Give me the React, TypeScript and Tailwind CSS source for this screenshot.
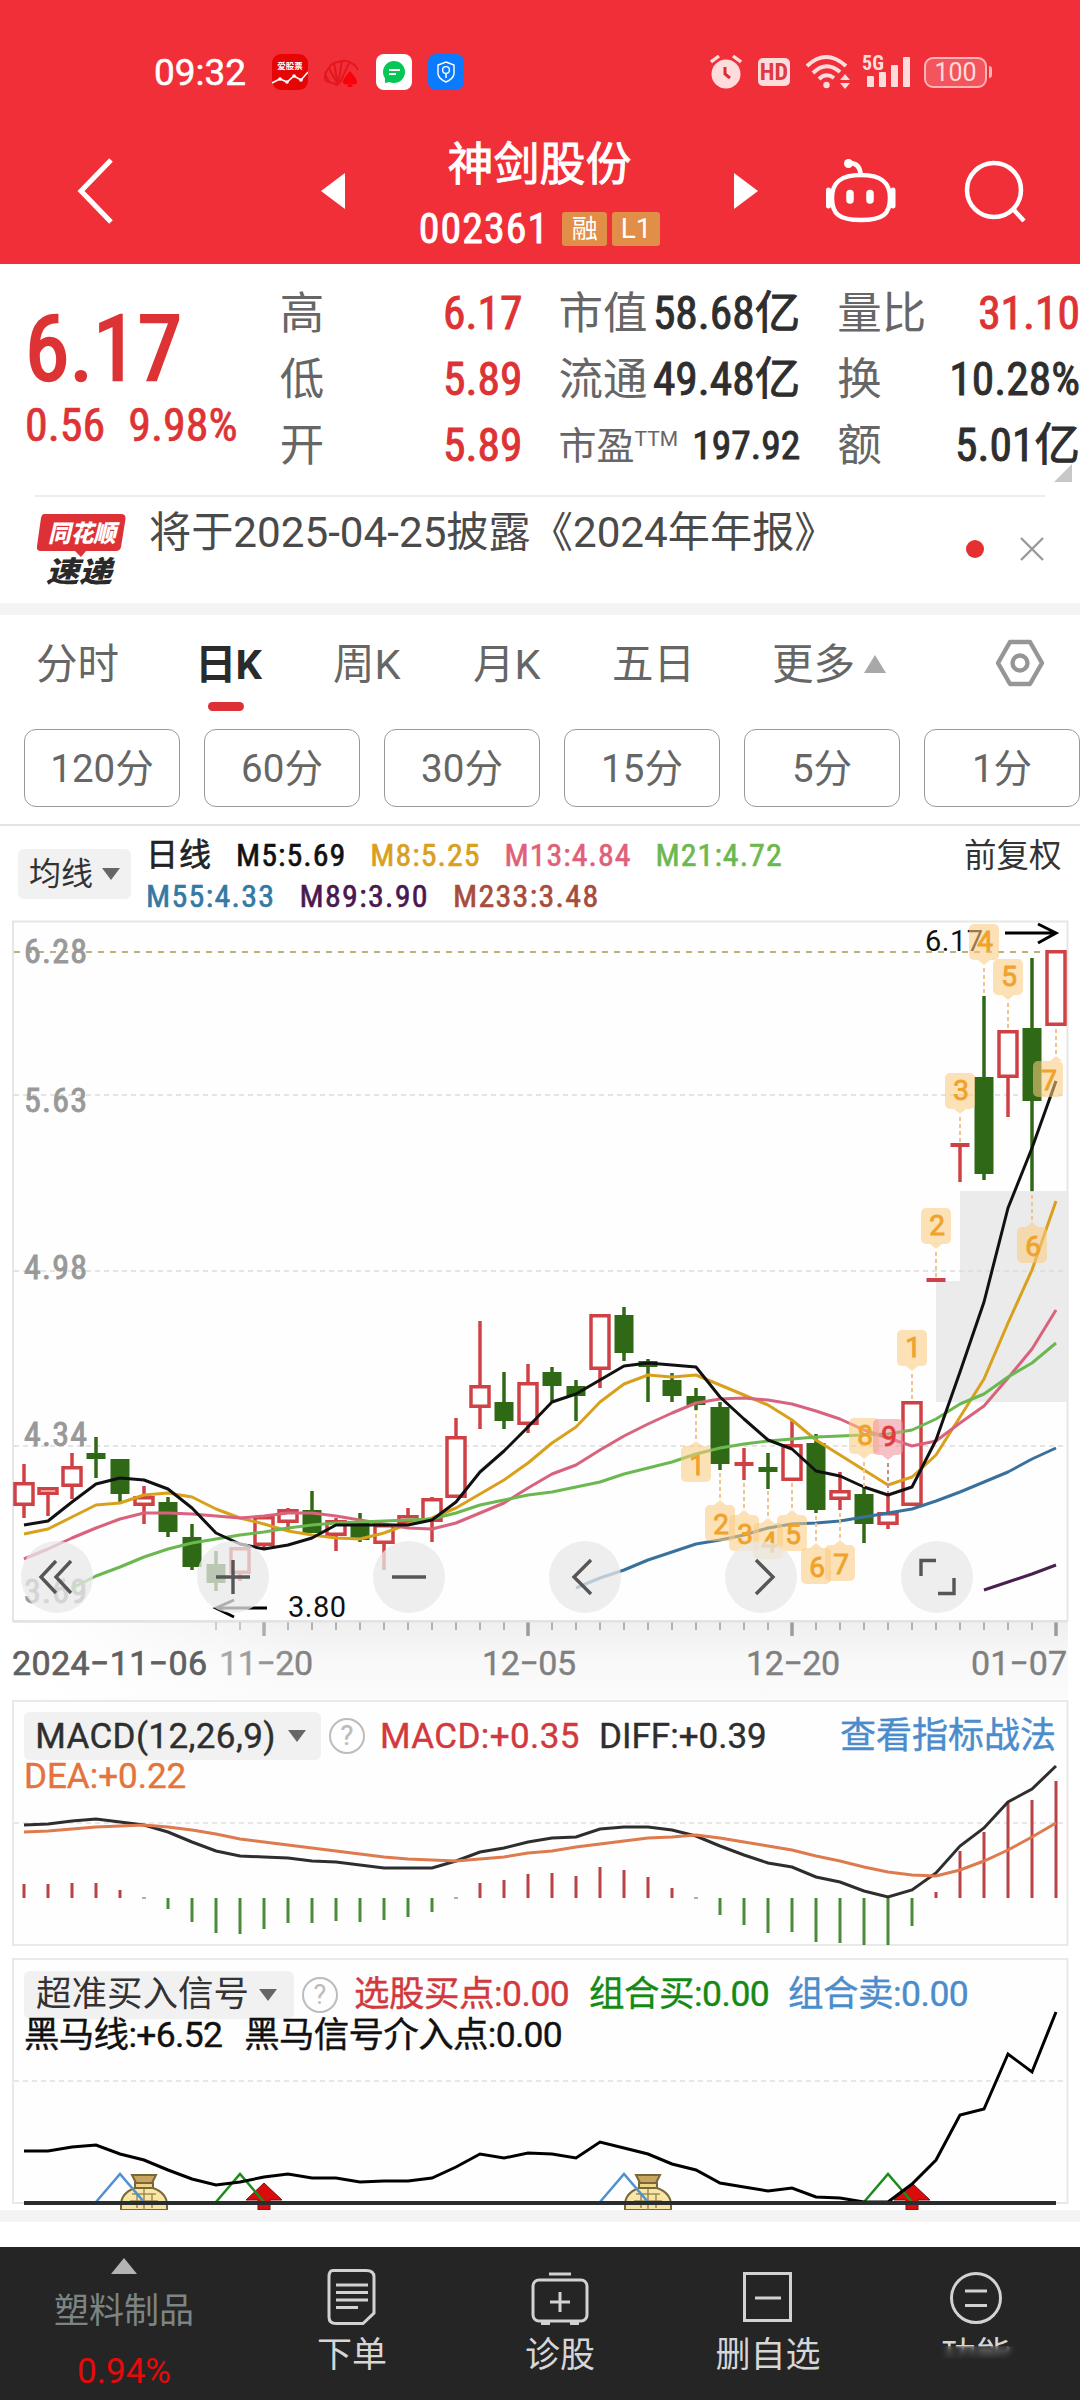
import type { ReactNode } from "react";

/* ── Chart data ── */

const STEP = 24;
const px = (i: number) => STEP + i * STEP;

// [up, high, body top, body bottom, low] in chart units
type Candle = [boolean, number, number, number, number];

const candles: Candle[] = [
  [true, 1464, 1482, 1506, 1518],
  [true, 1487, 1487, 1495, 1516],
  [true, 1453, 1466, 1487, 1499],
  [false, 1437, 1453, 1459, 1478],
  [false, 1459, 1459, 1494, 1504],
  [true, 1486, 1496, 1506, 1524],
  [false, 1497, 1502, 1532, 1537],
  [false, 1524, 1537, 1567, 1570],
  [false, 1551, 1564, 1583, 1591],
  [true, 1547, 1547, 1574, 1581],
  [true, 1516, 1516, 1546, 1550],
  [true, 1508, 1509, 1523, 1530],
  [false, 1491, 1510, 1533, 1533],
  [true, 1518, 1520, 1536, 1551],
  [false, 1513, 1523, 1540, 1542],
  [true, 1524, 1524, 1544, 1570],
  [true, 1508, 1515, 1524, 1524],
  [true, 1497, 1498, 1522, 1542],
  [true, 1418, 1436, 1498, 1498],
  [true, 1321, 1385, 1408, 1429],
  [false, 1372, 1402, 1421, 1429],
  [true, 1364, 1382, 1425, 1433],
  [false, 1367, 1372, 1386, 1402],
  [false, 1380, 1386, 1396, 1421],
  [true, 1314, 1314, 1370, 1388],
  [false, 1307, 1315, 1353, 1361],
  [false, 1359, 1361, 1367, 1402],
  [false, 1373, 1380, 1396, 1402],
  [false, 1388, 1396, 1405, 1410],
  [false, 1402, 1407, 1464, 1470],
  [true, 1448, 1462, 1466, 1480],
  [false, 1453, 1467, 1472, 1489],
  [true, 1421, 1444, 1481, 1481],
  [false, 1434, 1443, 1510, 1513],
  [true, 1472, 1490, 1500, 1510],
  [false, 1488, 1494, 1524, 1543],
  [true, 1493, 1512, 1525, 1529],
  [true, 1401, 1401, 1506, 1506],
  [true, 1278, 1278, 1282, 1282],
  [true, 1143, 1143, 1147, 1182],
  [false, 996, 1077, 1174, 1180],
  [true, 1030, 1030, 1078, 1117],
  [false, 958, 1028, 1101, 1191],
  [true, 950, 950, 1026, 1026],
];

const ma = [
  { color: "#d9a01c", start: 0, ys: [1534, 1529, 1517, 1505, 1503, 1495, 1493, 1497, 1509, 1518, 1524, 1531, 1535, 1538, 1539, 1533, 1524, 1518, 1508, 1494, 1480, 1463, 1443, 1427, 1402, 1384, 1375, 1377, 1375, 1385, 1395, 1405, 1420, 1440, 1455, 1470, 1485, 1477, 1455, 1417, 1379, 1323, 1270, 1201] },
  { color: "#d9627c", start: 0, ys: [1559, 1549, 1538, 1528, 1519, 1513, 1513, 1514, 1516, 1518, 1516, 1513, 1513, 1516, 1520, 1524, 1528, 1529, 1523, 1513, 1503, 1488, 1474, 1465, 1450, 1436, 1424, 1413, 1403, 1399, 1398, 1400, 1404, 1411, 1419, 1430, 1438, 1446, 1441, 1423, 1406, 1378, 1349, 1310] },
  { color: "#6cb850", start: 2, ys: [1588, 1576, 1567, 1557, 1549, 1543, 1539, 1535, 1532, 1528, 1525, 1523, 1522, 1521, 1520, 1519, 1513, 1505, 1500, 1495, 1492, 1487, 1482, 1474, 1468, 1462, 1454, 1448, 1444, 1441, 1439, 1437, 1436, 1435, 1434, 1430, 1419, 1404, 1394, 1377, 1363, 1343] },
  { color: "#38729c", start: 23, ys: [1588, 1578, 1570, 1560, 1552, 1544, 1540, 1535, 1528, 1524, 1523, 1521, 1517, 1513, 1509, 1501, 1492, 1482, 1472, 1459, 1448] },
  { color: "#4a2050", start: 40, ys: [1590, 1582, 1574, 1565] },
  { color: "#111111", start: 0, ys: [1525, 1521, 1502, 1484, 1478, 1480, 1489, 1508, 1533, 1544, 1549, 1545, 1538, 1525, 1525, 1525, 1525, 1520, 1502, 1472, 1451, 1427, 1402, 1394, 1380, 1366, 1363, 1365, 1367, 1397, 1419, 1440, 1449, 1471, 1476, 1487, 1495, 1487, 1440, 1372, 1302, 1208, 1148, 1081] },
];

const diff = [1825, 1824, 1821, 1819, 1822, 1825, 1832, 1842, 1851, 1856, 1857, 1858, 1861, 1862, 1865, 1868, 1868, 1868, 1861, 1852, 1848, 1842, 1838, 1837, 1829, 1827, 1827, 1830, 1836, 1846, 1855, 1863, 1867, 1877, 1882, 1891, 1897, 1890, 1873, 1846, 1828, 1802, 1789, 1766];
const dea = [1832, 1831, 1829, 1827, 1826, 1825, 1827, 1830, 1834, 1839, 1842, 1845, 1848, 1851, 1854, 1857, 1859, 1860, 1861, 1859, 1857, 1853, 1851, 1847, 1844, 1841, 1838, 1837, 1835, 1838, 1842, 1846, 1850, 1856, 1861, 1867, 1872, 1875, 1876, 1870, 1861, 1850, 1837, 1823];
const macd = [1884, 1884, 1883, 1883, 1890, 1898, 1909, 1922, 1933, 1934, 1929, 1923, 1923, 1921, 1922, 1920, 1917, 1912, 1898, 1883, 1880, 1874, 1873, 1876, 1867, 1870, 1877, 1888, 1898, 1915, 1925, 1933, 1932, 1942, 1943, 1945, 1945, 1926, 1892, 1851, 1832, 1803, 1800, 1781];
const horse = [2151, 2151, 2147, 2145, 2154, 2160, 2170, 2179, 2185, 2182, 2177, 2174, 2178, 2178, 2182, 2181, 2181, 2178, 2167, 2154, 2158, 2153, 2154, 2158, 2142, 2148, 2154, 2164, 2170, 2183, 2187, 2191, 2188, 2197, 2198, 2202, 2202, 2184, 2160, 2115, 2109, 2054, 2072, 2012];

const line = (ys: number[], start = 0) => ys.map((y, i) => `${px(start + i)},${y}`).join(" ");

// Nine-turn counters: [label, x, box top, dash end, direction the tip points]
const marks: [string, number, number, number, "down" | "up"][] = [
  ["1", 696, 1446, 1410, "up"],
  ["2", 720, 1505, 1470, "up"],
  ["3", 744, 1515, 1480, "up"],
  ["4", 768, 1523, 1489, "up"],
  ["5", 792, 1515, 1481, "up"],
  ["6", 816, 1548, 1513, "up"],
  ["7", 840, 1545, 1510, "up"],
  ["8", 864, 1418, 1488, "down"],
  ["9", 888, 1419, 1493, "down"],
  ["1", 912, 1330, 1400, "down"],
  ["2", 936, 1208, 1278, "down"],
  ["3", 960, 1073, 1144, "down"],
  ["4", 984, 924, 996, "down"],
  ["5", 1008, 959, 1030, "down"],
  ["6", 1032, 1227, 1191, "up"],
  ["7", 1056, 1061, 1027, "up"],
];

/* ── Small pieces ── */

function Caret({ className }: { className?: string }) {
  return (
    <svg viewBox="0 0 18 12" className={`w-[18px] h-3 ${className ?? ""}`}>
      <path d="M0 0H18L9 12Z" fill="#666" />
    </svg>
  );
}

function Help() {
  return (
    <span className="flex items-center justify-center w-[36px] h-[36px] rounded-full border-[2.5px] border-[#bcbcbc] text-[#bcbcbc] text-[27px] leading-none">
      ?
    </span>
  );
}

function Mark({ label, x, y, end, dir }: { label: string; x: number; y: number; end: number; dir: "down" | "up" }) {
  const hot = label === "9";
  const cx = x === 1056 ? 1048 : x;
  const tip = dir === "down" ? `M${x - 6} ${y + 36}h12l-6 5z` : `M${x - 6} ${y}h12l-6 -5z`;
  return (
    <g>
      <line
        x1={x}
        x2={x}
        y1={dir === "down" ? y + 44 : y - 7}
        y2={end}
        stroke={hot ? "#c98a94" : "#f0c48e"}
        strokeWidth="2"
        strokeDasharray="4 3"
      />
      <g fill={hot ? "#f0929c" : "#fccb80"} opacity="0.56">
        <rect x={cx - 15} y={y} width="30" height="36" rx="5" />
        <path d={tip} />
      </g>
      <text
        x={cx + 1}
        y={y + (dir === "down" ? 27 : 29)}
        textAnchor="middle"
        fontSize="28"
        fill={hot ? "#e23a3a" : "#efa32c"}
        stroke={hot ? "#e23a3a" : "#efa32c"}
        strokeWidth="0.9"
      >
        {label}
      </text>
    </g>
  );
}

function MoneyBag({ x }: { x: number }) {
  return (
    <g transform={`translate(${x} 2174)`} stroke="#77683a" strokeWidth="2">
      <path d="M-12 1H12L8 9H-8Z" fill="#c9a560" />
      <path d="M-9 9H9V14H-9Z" fill="#f0d58a" />
      <path d="M-9 14Q-23 19 -23 31V36H23V31Q23 19 9 14Z" fill="#f7e6a6" />
      <path d="M-12 20H12M-14 27H14M0 15V36M-7 20V34M8 20V34" strokeWidth="1.5" stroke="#a08c50" />
    </g>
  );
}

function RedArrow({ x }: { x: number }) {
  return <path d={`M${x} 2183L${x + 18} 2200H${x + 6}V2210H${x - 6}V2200H${x - 18}Z`} fill="#d80c0c" stroke="#7a1010" strokeWidth="1" />;
}

function RoundButton({ children }: { children: ReactNode }) {
  return (
    <button className="flex items-center justify-center w-[72px] h-[72px] rounded-full bg-[#e8e8e8]/75">
      <svg viewBox="0 0 40 40" className="w-10 h-10" fill="none" stroke="#565656" strokeWidth="3.4">
        {children}
      </svg>
    </button>
  );
}

/* ── Header ── */

function StatusBar() {
  return (
    <div className="flex items-center justify-between h-[136px] mt-2 pl-[154px] pr-[88px] text-white -translate-y-1">
      <div className="flex items-center">
        <span className="w-[118px] text-[37px] leading-none [-webkit-text-stroke:0.5px_white]">09:32</span>
        <svg viewBox="0 0 36 36" className="w-9 h-9">
          <rect width="36" height="36" rx="9" fill="#e60505" />
          <text x="18" y="15" textAnchor="middle" fontSize="8.5" fontWeight="700" fill="#fff">爱股票</text>
          <path d="M0 29L8 25L15 28L22 22L29 26L36 18" stroke="#fff" strokeWidth="1.6" fill="none" />
          <g fill="#fff">
            <circle cx="8" cy="25" r="1.8" />
            <circle cx="15" cy="28" r="1.8" />
            <circle cx="22" cy="22" r="1.8" />
            <circle cx="29" cy="26" r="1.8" />
          </g>
        </svg>
        <svg viewBox="0 0 36 36" className="w-9 h-9 ml-4" fill="none" stroke="#e4161e" strokeWidth="2">
          <path d="M14 31L2 27Q-1 20 5 14Q8 8 15 8Q22 5 27 9Q32 11 34 16" />
          <path d="M14 31L5 14M14 31L10 9M14 31L18 7M16 29L25 9M5 27L1 21" />
          <path d="M26 17Q34 26 33 29Q30 32 27 29L29 33H23L25 29Q22 32 19 29Q18 26 26 17Z" fill="#fa0008" stroke="none" />
        </svg>
        <svg viewBox="0 0 36 36" className="w-9 h-9 ml-4">
          <rect width="36" height="36" rx="8" fill="#fff" />
          <circle cx="18" cy="18" r="11" fill="#06c755" />
          <path d="M9 21V29L18 27Z" fill="#06c755" />
          <path d="M13 16H24M13 20H20" stroke="#fff" strokeWidth="1.8" />
        </svg>
        <svg viewBox="0 0 36 36" className="w-9 h-9 ml-4">
          <rect width="36" height="36" rx="8" fill="#0a7bff" />
          <path d="M18 8L26 11V20Q25 25 18 28Q11 25 10 20V11Z" fill="none" stroke="#fff" strokeWidth="1.4" />
          <circle cx="18" cy="16" r="3.4" fill="none" stroke="#fff" strokeWidth="1.4" />
          <path d="M18 19V24" stroke="#fff" strokeWidth="1.6" />
        </svg>
      </div>

      <div className="flex items-center text-[#ffdcdc]">
        <svg viewBox="0 0 32 36" className="w-8 h-9" fill="#ffdcdc" stroke="#ffdcdc">
          <circle cx="16" cy="20" r="14.5" stroke="none" />
          <path d="M1 8L9 2M31 8L23 2" strokeWidth="3.4" />
          <path d="M15 13V20L20 24" stroke="#dd2a33" strokeWidth="3" fill="none" />
        </svg>
        <span className="flex items-center justify-center w-8 h-7 ml-4 rounded-[5px] bg-[#ffdcdc] text-[#dd3a42] text-[24px] font-bold leading-none font-['Roboto_Condensed']">
          HD
        </span>
        <svg viewBox="0 0 46 36" className="w-[46px] h-9 ml-4" fill="none" stroke="#ffdcdc" strokeWidth="4">
          <path d="M1 12Q20 -6 40 12" />
          <path d="M7 19Q20 6 34 18" />
          <path d="M13 25Q20 18 28 24" />
          <circle cx="20.5" cy="31" r="3.2" fill="#ffdcdc" stroke="none" />
          <path d="M34 26L39 20L44 26ZM34 29H44L39 35Z" fill="#ffdcdc" stroke="none" />
        </svg>
        <svg viewBox="0 0 48 36" className="w-12 h-9 ml-[10px]" fill="#ffdcdc">
          <text x="0" y="16" fontSize="20" fontWeight="700" fontFamily="Roboto Condensed" textLength="22">5G</text>
          <rect x="5" y="22" width="7" height="11" rx="1" />
          <rect x="17" y="18" width="7" height="15" rx="1" />
          <rect x="29" y="11" width="7" height="22" rx="1" />
          <rect x="41" y="3" width="7" height="30" rx="1" />
        </svg>
        <span className="flex items-center justify-center w-[63px] h-[31px] ml-[14px] rounded-[9px] border-[2.5px] border-[#ffb4b8] bg-[#f4545c] text-[25px] leading-none">
          100
        </span>
        <span className="w-[3px] h-3 ml-[2px] rounded-r bg-[#ffb4b8]" />
      </div>
    </div>
  );
}

function TitleBar() {
  return (
    <div className="flex items-center h-[120px] pl-[76px] pb-[26px] text-white">
      <svg viewBox="0 0 38 66" className="w-[38px] h-[66px] shrink-0" fill="none" stroke="#fff" strokeWidth="5">
        <path d="M35 2L5 33L35 64" />
      </svg>
      <svg viewBox="0 0 24 36" className="w-6 h-9 ml-[207px] shrink-0" fill="#fff">
        <path d="M24 0V36L0 18Z" />
      </svg>
      <div className="flex flex-col items-center w-[389px] self-start -mt-[3px] shrink-0">
        <h1 className="text-[46px] leading-[46px] font-normal [-webkit-text-stroke:0.9px_white]">神剑股份</h1>
        <div className="flex items-center h-[34px] mt-[25px] gap-[5px]">
          <span className="mr-2 text-[42px] leading-none tracking-[1px] font-['Roboto_Condensed'] [-webkit-text-stroke:0.8px_white]">002361</span>
          <span className="flex items-center justify-center w-[45px] h-[34px] rounded-[3px] bg-[#e08e48] text-[26px] leading-none">融</span>
          <span className="flex items-center justify-center w-[48px] h-[34px] rounded-[3px] bg-[#e08e48] text-[28px] leading-none">L1</span>
        </div>
      </div>
      <svg viewBox="0 0 24 36" className="w-6 h-9 shrink-0" fill="#fff">
        <path d="M0 0V36L24 18Z" />
      </svg>
      <svg viewBox="826 158 72 66" className="w-[72px] h-[66px] ml-[67px] shrink-0" fill="none" stroke="#fff" strokeWidth="4.5">
        <path d="M850 163Q861 163 861.5 174" />
        <circle cx="849.5" cy="163.500" r="4.500" fill="#fff" stroke="none" />
        <path d="M833 198C833 182 842 175 862 175S891 182 891 198S884 220 862 220S833 214 833 198Z" />
        <path d="M829.500 190V206M894 190V206" strokeWidth="5" strokeLinecap="round" />
        <path d="M851 193.500V200M871 193.500V200" strokeWidth="7.500" strokeLinecap="round" />
      </svg>
      <svg viewBox="0 0 62 62" className="w-[62px] h-[62px] ml-[67px] shrink-0" fill="none" stroke="#fff" strokeWidth="4.5">
        <circle cx="30" cy="30" r="27" />
        <path d="M49 49L60 61" />
      </svg>
    </div>
  );
}

/* ── Quote ── */

function Stat({ label, value, red, small }: { label: ReactNode; value: string; red?: boolean; small?: boolean }) {
  return (
    <div className="flex items-center justify-between h-[66px]">
      <span className={small ? "flex text-[38px] leading-[66px] text-[#666]" : "text-[44.5px] leading-[66px] text-[#666]"}>{label}</span>
      <span
        className={`leading-[66px] whitespace-nowrap font-['Roboto_Condensed','Noto_Sans_CJK_SC',sans-serif] ${small ? "text-[39.5px]" : "text-[45.5px]"} ${
          red ? "text-[#dd3335] [-webkit-text-stroke:0.9px_#dd3335]" : "text-[#2e2e2e] [-webkit-text-stroke:0.9px_#2e2e2e]"
        }`}
      >
        {value}
      </span>
    </div>
  );
}

function Quote() {
  return (
    <section className="relative flex h-[231px] pt-[17px]">
      <div className="w-[280px] pl-[25px] text-[#dd3335] font-['Roboto_Condensed']">
        <p className="mt-[23px] text-[90px] leading-[92px] [-webkit-text-stroke:2.4px_#dd3335]">6.17</p>
        <p className="flex gap-[23px] mt-[6px] text-[46px] leading-[46px] [-webkit-text-stroke:0.7px_#dd3335]">
          <span>0.56</span>
          <span>9.98%</span>
        </p>
      </div>
      <div className="w-[243px]">
        <Stat label="高" value="6.17" red />
        <Stat label="低" value="5.89" red />
        <Stat label="开" value="5.89" red />
      </div>
      <div className="w-[242px] ml-[36px]">
        <Stat label="市值" value="58.68亿" />
        <Stat label="流通" value="49.48亿" />
        <Stat
          small
          label={
            <>
              市盈<sup className="text-[21px] leading-none top-[16px] h-6">TTM</sup>
            </>
          }
          value="197.92"
        />
      </div>
      <div className="w-[243px] ml-[37px]">
        <Stat label="量比" value="31.10" red />
        <Stat label="换" value="10.28%" />
        <Stat label="额" value="5.01亿" />
      </div>
      <svg viewBox="0 0 18 18" className="absolute right-2 bottom-[13px] w-[18px] h-[18px]">
        <path d="M18 0V18H0Z" fill="#c8c8c8" />
      </svg>
    </section>
  );
}

function News() {
  return (
    <section className="flex h-[108px] mx-[35px] border-t-2 border-[#ececec] text-[#4a4a4a]">
      <svg viewBox="35 510 92 78" className="w-[92px] h-[78px] mt-[14px] shrink-0">
        <path d="M44 513H121Q126 513 125.500 518L121 546Q120 550 116 550H86L81 556L75 550H41Q36 550 37 545L41 517Q42 513 44 513Z" fill="#dd3136" />
        <text x="82" y="541" textAnchor="middle" fontSize="24" fontWeight="900" fill="#fff" fontStyle="italic" textLength="68" lengthAdjust="spacingAndGlyphs">
          同花顺
        </text>
        <text x="79" y="581" textAnchor="middle" fontSize="29" fontWeight="900" fill="#2a2a2a" fontStyle="italic" textLength="66" lengthAdjust="spacingAndGlyphs">
          速递
        </text>
      </svg>
      <p className="w-[817px] ml-[22px] mt-[8px] text-[42.2px] leading-[56px] whitespace-nowrap">将于2025-04-25披露《2024年年报》</p>
      <span className="w-[18px] h-[18px] mt-[43px] rounded-full bg-[#e6302f] shrink-0" />
      <svg viewBox="0 0 24 24" className="w-6 h-6 mt-[40px] ml-[36px] shrink-0" stroke="#999" strokeWidth="2.4">
        <path d="M1 1L23 23M23 1L1 23" />
      </svg>
    </section>
  );
}

/* ── Period tabs ── */

function Tabs() {
  return (
    <nav className="flex h-[114px] pl-[36px] pt-[23px] text-[41.5px] leading-[54px] text-[#666]">
      <span className="w-[159px]">分时</span>
      <div className="w-[138px]">
        <p className="text-[#2b2b2b] font-bold tracking-[-1px]">日K</p>
        <div className="w-9 h-[9px] mt-[10px] ml-[13px] rounded-full bg-[#dd3136]" />
      </div>
      <span className="w-[140px]">周K</span>
      <span className="w-[139px]">月K</span>
      <span className="w-[160px]">五日</span>
      <span className="w-[84px]">更多</span>
      <svg viewBox="0 0 22 18" className="w-[22px] h-[18px] mt-[17px] ml-[8px]">
        <path d="M11 0L22 18H0Z" fill="#a8a8a8" />
      </svg>
      <svg viewBox="0 0 50 48" className="w-[50px] h-12 ml-[109px] mt-px" fill="none" stroke="#969696" strokeWidth="4.4">
        <path d="M15 3H35L47 24L35 45H15L3 24Z" strokeLinejoin="round" />
        <circle cx="25" cy="24" r="7.500" />
      </svg>
    </nav>
  );
}

function Chips() {
  return (
    <div className="flex gap-6 h-[97px] pl-6 border-b-2 border-[#e4e4e4] overflow-hidden">
      {["120分", "60分", "30分", "15分", "5分", "1分"].map((label) => (
        <button key={label} className="flex items-center justify-center w-[156px] h-[78px] pt-[2px] rounded-xl border-[1.5px] border-[#999] text-[38.5px] leading-none text-[#666] shrink-0">
          {label}
        </button>
      ))}
    </div>
  );
}

function Averages() {
  return (
    <div className="flex h-[94px] pl-[18px] font-['Roboto_Condensed','Noto_Sans_CJK_SC',sans-serif] text-[32px]">
      <button className="flex items-center justify-center gap-[9px] w-[113px] h-[50px] mt-[23px] rounded-md bg-[#f1f1f1] text-[32px] leading-none text-[#333]">
        均线
        <Caret />
      </button>
      <div className="ml-[15px] pt-[9px] w-[818px] leading-[41px] tracking-[1px] whitespace-nowrap">
        <p className="flex h-[41px] gap-[24px] [-webkit-text-stroke:0.6px]">
          <span className="text-[#222]">日线</span>
          <span className="text-[#111]">M5:5.69</span>
          <span className="text-[#d9a01c]">M8:5.25</span>
          <span className="text-[#e0607a]">M13:4.84</span>
          <span className="text-[#6cb850]">M21:4.72</span>
        </p>
        <p className="flex h-[41px] gap-[24px] tracking-[1.3px] [-webkit-text-stroke:0.6px]">
          <span className="text-[#3478a4]">M55:4.33</span>
          <span className="text-[#4a1850]">M89:3.90</span>
          <span className="text-[#a84c3c]">M233:3.48</span>
        </p>
      </div>
      <span className="pt-[10px] leading-[41px] text-[32.500px] text-[#333]">前复权</span>
    </div>
  );
}

/* ── Charts ── */

function KLine() {
  return (
    <section className="relative h-[780px]">
      <svg viewBox="0 920 1080 780" className="block w-[1080px] h-[780px]">
        <defs>
          <linearGradient id="axis" x1="0" x2="0" y1="0" y2="1">
            <stop offset="0" stopColor="#efefef" />
            <stop offset="0.5" stopColor="#f8f8f8" />
            <stop offset="1" stopColor="#fbfbfb" />
          </linearGradient>
          <linearGradient id="fade" x1="0" x2="1" y1="0" y2="0">
            <stop offset="0" stopColor="#fff" />
            <stop offset="0.25" stopColor="#fff" stopOpacity="0.85" />
            <stop offset="1" stopColor="#fff" stopOpacity="0" />
          </linearGradient>
        </defs>

        <rect x="13" y="1621" width="1055" height="78" fill="url(#axis)" />
        <path d="M13 1621V921.500H1067.500V1621Z" fill="#fefefe" stroke="#e6e6e6" strokeWidth="2" />
        <path d="M960 1191H1067V1402H936V1281H960Z" fill="#ebebeb" />

        <g stroke="#dcdcdc" strokeWidth="1.600" strokeDasharray="5 4">
          <path d="M14 1095H1066M14 1271H1066M14 1446H1066" />
        </g>
        <path d="M14 952H1046" stroke="#bdb27c" strokeWidth="1.800" strokeDasharray="6 6" />

        <g fontSize="34" fill="#999" stroke="#999" strokeWidth="0.900" fontFamily="Roboto Condensed">
          <text x="24" y="963" textLength="63">6.28</text>
          <text x="24" y="1112" textLength="63">5.63</text>
          <text x="24" y="1279" textLength="63">4.98</text>
          <text x="24" y="1446" textLength="63">4.34</text>
          <text x="24" y="1603" textLength="63">3.69</text>
        </g>

        {candles.map(([up, high, top, bottom, low], i) => {
          const x = px(i);
          const flat = bottom - top <= 5;
          return (
            <g key={i} stroke={up ? "#cf4145" : "#306915"} strokeWidth="3.500">
              {high < top && <line x1={x} x2={x} y1={high} y2={top} />}
              {low > bottom && <line x1={x} x2={x} y1={bottom} y2={low} />}
              {up && !flat ? (
                <rect x={x - 9} y={top + 1.75} width="18" height={Math.max(bottom - top - 3.5, 3)} fill="#fff" />
              ) : (
                <rect x={x - 9.5} y={top} width="19" height={bottom - top} fill={up ? "#cf4145" : "#306915"} stroke="none" />
              )}
            </g>
          );
        })}

        {ma.map(({ color, start, ys }) => (
          <polyline key={color} points={line(ys, start)} fill="none" stroke={color} strokeWidth="3" strokeLinejoin="round" />
        ))}

        <g fontSize="29" fill="#111">
          <text x="925" y="951" textLength="58">6.17</text>
          <text x="288" y="1617" textLength="58">3.80</text>
        </g>

        <g fontFamily="Roboto">
          {marks.map(([label, x, y, end, dir]) => (
            <Mark key={`${x}`} label={label} x={x} y={y} end={end} dir={dir} />
          ))}
        </g>

        <g fill="none" stroke="#000" strokeWidth="3">
          <path d="M1005 933H1055M1038 924L1056 933L1038 943" />
          <path d="M267 1608H217M234 1600L216 1608L234 1617" />
        </g>

        {/* Time axis */}
        <g stroke="#9c9c9c">
          {Array.from({ length: 36 }, (_, n) => n + 8).map((i) => {
            const major = (i - 10) % 11 === 0;
            return <line key={i} x1={px(i)} x2={px(i)} y1="1622" y2={major ? 1636 : 1630} strokeWidth={major ? 3.5 : 1.5} />;
          })}
        </g>
        <path d="M13 1621.500H1067" stroke="#e2e2e2" strokeWidth="2" />
        <g fontSize="34" fill="#808080" stroke="#808080" strokeWidth="0.400">
          <text x="219" y="1675" textLength="94">11−20</text>
          <text x="482" y="1675" textLength="94">12−05</text>
          <text x="746" y="1675" textLength="94">12−20</text>
          <text x="971" y="1675" textLength="96">01−07</text>
        </g>
        <rect x="12" y="1623" width="298" height="75" fill="url(#fade)" />
        <text x="12" y="1675" fontSize="34" fill="#606060" stroke="#606060" strokeWidth="0.700" textLength="195">2024−11−06</text>
      </svg>

      {/* Floating chart controls */}
      <div className="absolute left-[21px] top-[621px] flex gap-[104px]">
        <RoundButton>
          <path d="M19 4L4 20L19 36M34 4L19 20L34 36" />
        </RoundButton>
        <RoundButton>
          <path d="M3 20H37M20 3V37" />
        </RoundButton>
        <RoundButton>
          <path d="M3 20H37" />
        </RoundButton>
        <RoundButton>
          <path d="M26 3L9 20L26 37" />
        </RoundButton>
        <RoundButton>
          <path d="M15 3L32 20L15 37" />
        </RoundButton>
        <RoundButton>
          <path d="M19 3.500H4V19M37 21V36.500H21" />
        </RoundButton>
      </div>
    </section>
  );
}

function MacdPanel() {
  return (
    <section className="relative h-[246px] mx-3">
      <svg viewBox="12 1700 1057 246" className="absolute inset-0 w-[1057px] h-[246px]">
        <rect x="13" y="1701" width="1054.500" height="244" fill="#fefefe" stroke="#e9e9e9" strokeWidth="2" />
        <path d="M14 1823H1066" stroke="#e0e0e0" strokeWidth="1.500" strokeDasharray="5 4" />
        {macd.map((y, i) =>
          y === 1898 ? (
            <path key={i} d={`M${px(i) - 2} 1898h4`} stroke="#999" strokeWidth="1.500" />
          ) : (
            <line key={i} x1={px(i)} x2={px(i)} y1="1898" y2={y} stroke={y < 1898 ? "#b84246" : "#4b8a38"} strokeWidth="3" />
          )
        )}
        <polyline points={line(diff)} fill="none" stroke="#2e2e2e" strokeWidth="3" />
        <polyline points={line(dea)} fill="none" stroke="#dd7a4e" strokeWidth="3" />
      </svg>
      <div className="relative flex items-center h-12 top-3 ml-3 text-[35px] leading-none whitespace-nowrap [-webkit-text-stroke:0.4px]">
        <button className="flex items-center gap-3 w-[297px] h-12 pl-[11px] rounded-md bg-[#f1f1f1] text-[#2e2e2e]">
          <span className="w-[241px] tracking-[0.4px]">MACD(12,26,9)</span>
          <Caret />
        </button>
        <span className="ml-[8px]">
          <Help />
        </span>
        <span className="w-[219px] ml-[15px] tracking-[0.4px] text-[#d2383c]">MACD:+0.35</span>
        <span className="w-[241px] text-[#2e2e2e]">DIFF:+0.39</span>
        <span className="text-[36px] text-[#4a8ccc]">查看指标战法</span>
      </div>
      <p className="relative top-[9px] ml-[12px] text-[35px] leading-[40px] text-[#e2743c] [-webkit-text-stroke:0.4px]">DEA:+0.22</p>
    </section>
  );
}

function SignalPanel() {
  return (
    <section className="relative h-[252px] mx-3 mt-3">
      <svg viewBox="12 1958 1057 252" className="absolute inset-0 w-[1057px] h-[252px]">
        <rect x="13" y="1959" width="1054.500" height="244" fill="#fefefe" stroke="#e9e9e9" strokeWidth="2" />
        <path d="M14 2081H1066" stroke="#e0e0e0" strokeWidth="1.500" strokeDasharray="5 4" />
        <MoneyBag x={144} />
        <MoneyBag x={648} />
        <RedArrow x={264} />
        <RedArrow x={912} />
        <g fill="none" strokeWidth="2.500">
          <path d="M96 2202L120 2174L144 2202M600 2202L624 2174L648 2202" stroke="#5090d0" />
          <path d="M216 2202L240 2174L264 2202M864 2202L888 2174L912 2202" stroke="#1c8c1c" />
        </g>
        <polyline points={line(horse)} fill="none" stroke="#000" strokeWidth="3" />
        <path d="M24 2203H1056" stroke="#2a2d30" strokeWidth="4" />
      </svg>
      <div className="relative flex items-center h-12 top-[13px] ml-3 text-[35.500px] leading-none whitespace-nowrap">
        <button className="flex items-center gap-[10px] w-[270px] h-12 pl-3 rounded-md bg-[#f1f1f1] text-[#333]">
          超准买入信号
          <Caret />
        </button>
        <span className="ml-2">
          <Help />
        </span>
        <span className="w-[235px] ml-[16px] tracking-[-0.5px] [-webkit-text-stroke:0.4px] text-[#d2383c]">选股买点:0.00</span>
        <span className="w-[199px] tracking-[-0.5px] [-webkit-text-stroke:0.4px] text-[#148a14]">组合买:0.00</span>
        <span className="tracking-[-0.5px] [-webkit-text-stroke:0.4px] text-[#4a8ccc]">组合卖:0.00</span>
      </div>
      <p className="relative flex gap-[22px] top-[11px] ml-[12px] text-[35.500px] leading-[36px] tracking-[-0.7px] whitespace-nowrap text-[#111] [-webkit-text-stroke:0.4px]">
        <span>黑马线:+6.52</span>
        <span>黑马信号介入点:0.00</span>
      </p>
    </section>
  );
}

/* ── Bottom bar ── */

function NavItem({ label, children }: { label: string; children: ReactNode }) {
  return (
    <div className="flex flex-col items-center w-[208px] pt-[21px] text-[#d6d6d6]">
      <svg viewBox="0 0 60 58" className="w-[60px] h-[58px]" fill="none" stroke="#d2d2d2" strokeWidth="3">
        {children}
      </svg>
      <span className="mt-[10px] text-[35px] leading-[40px]">{label}</span>
    </div>
  );
}

function BottomBar() {
  return (
    <footer className="relative flex h-[153px] bg-[#252525] overflow-hidden">
      <div className="flex flex-col items-center w-[248px] pt-[11px]">
        <svg viewBox="0 0 26 16" className="w-[26px] h-4">
          <path d="M13 0L26 16H0Z" fill="#b4b4b4" />
        </svg>
        <span className="mt-[17px] text-[35px] leading-[42px] text-[#7c8583]">塑料制品</span>
        <span className="mt-[18px] text-[35px] leading-[42px] text-[#e60a0a]">0.94%</span>
      </div>
      <NavItem label="下单">
        <path d="M11 2.500H44Q52 2.500 52 9V45L41 55.500H14Q7 55.500 7 49V9Q7 2.500 11 2.500Z" />
        <path d="M14 17H46M14 24.500H46M14 32H46M14 39.500H36" />
      </NavItem>
      <NavItem label="诊股">
        <rect x="3" y="12" width="54" height="41" rx="6" />
        <path d="M19 6H41M30 24V44M20 34H40" />
        <path d="M11 54.500H20M40 54.500H49" strokeWidth="5" />
      </NavItem>
      <NavItem label="删自选">
        <rect x="6.500" y="5.500" width="46" height="47" />
        <path d="M17 30H43" />
      </NavItem>
      <NavItem label="功能">
        <circle cx="30" cy="30" r="24.500" />
        <path d="M19 23H41M19 37.500H41" />
      </NavItem>
      <div className="absolute right-0 bottom-0 w-[190px] h-[54px] bg-gradient-to-b from-[#252525]/20 via-[#252525] via-25% to-[#252525] backdrop-blur-[3px]" />
    </footer>
  );
}

export default function App() {
  return (
    <main className="w-[1080px] h-[2400px] overflow-hidden bg-white font-['Roboto','Noto_Sans_CJK_SC',sans-serif]">
      <header className="h-[264px] bg-[#f12f38] flow-root">
        <StatusBar />
        <TitleBar />
      </header>
      <Quote />
      <News />
      <div className="h-3 bg-[#f4f4f4]" />
      <Tabs />
      <Chips />
      <Averages />
      <KLine />
      <MacdPanel />
      <SignalPanel />
      <div className="h-3 mb-[25px] bg-[#f4f4f4]" />
      <BottomBar />
    </main>
  );
}
